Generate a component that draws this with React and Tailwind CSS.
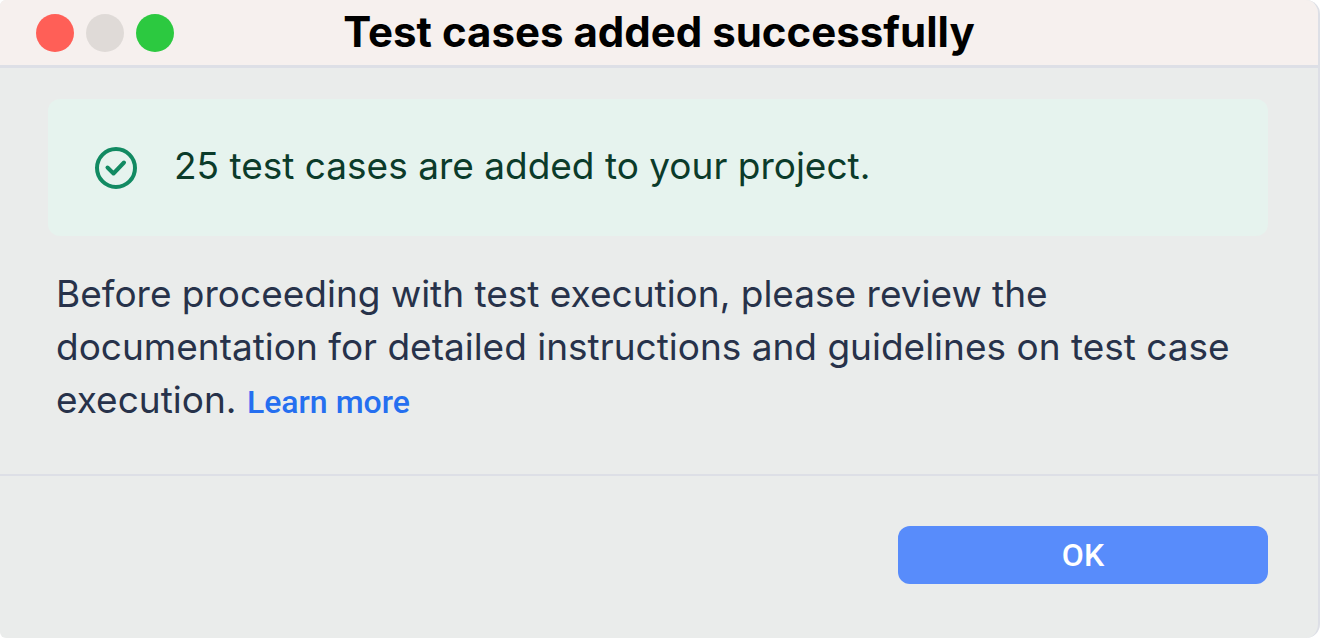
function TitleBar({ title }) {
  return (
    <header className="grid grid-cols-[1fr_auto_1fr] items-center h-[68px] px-9 bg-[#f6f0ee] border-b-3 border-[#dddfe6]">
      <div className="flex gap-3 pt-px">
        <button type="button" aria-label="Close" className="size-[38px] rounded-full bg-[#ff5f57]" />
        <button type="button" aria-label="Minimize" disabled className="size-[38px] rounded-full bg-[#dfdad7]" />
        <button type="button" aria-label="Zoom" className="size-[38px] rounded-full bg-[#2cc940]" />
      </div>
      <h1 className="pb-0.5 text-[42px] leading-[50px] font-bold text-black">{title}</h1>
    </header>
  )
}

function SuccessBanner({ children }) {
  return (
    <div role="status" className="flex items-center gap-9 h-[137px] px-[46px] rounded-xl bg-[#e6f3ee] text-[#0b3b2a]">
      <svg
        viewBox="0 0 44 44"
        className="size-11 shrink-0"
        fill="none"
        stroke="#128a62"
        strokeWidth="4"
        strokeLinecap="round"
        strokeLinejoin="round"
        aria-hidden="true"
      >
        <circle cx="22" cy="22" r="19" />
        <path d="M13.5 21.5l6 6L30 16.5" />
      </svg>
      <p className="pb-1 text-[37px] leading-[53px]">{children}</p>
    </div>
  )
}

export default function App() {
  return (
    <main className="flex flex-col min-h-screen overflow-hidden rounded-l-md rounded-r-[14px] border-r-2 border-[#dddfe6] bg-[#eaeceb] font-['Inter',sans-serif]">
      <TitleBar title="Test cases added successfully" />

      <section className="pl-12 pr-[50px] pt-[31px] pb-[45px]">
        <SuccessBanner>25 test cases are added to your project.</SuccessBanner>
        <p className="mt-[31px] px-2 text-[37px] leading-[53px] text-[#27324a]">
          Before proceeding with test execution, please review the documentation for detailed instructions and
          guidelines on test case execution.{' '}
          <a href="#docs" className="font-['Roboto',sans-serif] text-[32px] font-medium text-[#256ff0]">
            Learn more
          </a>
        </p>
      </section>

      <footer className="flex justify-end grow items-start pl-12 pr-[50px] pt-[50px] border-t-2 border-[#dddfe6]">
        <button type="button" className="w-[370px] h-[58px] rounded-xl bg-[#588cfb] font-['Roboto',sans-serif] text-[32px] font-medium text-white">
          OK
        </button>
      </footer>
    </main>
  )
}
